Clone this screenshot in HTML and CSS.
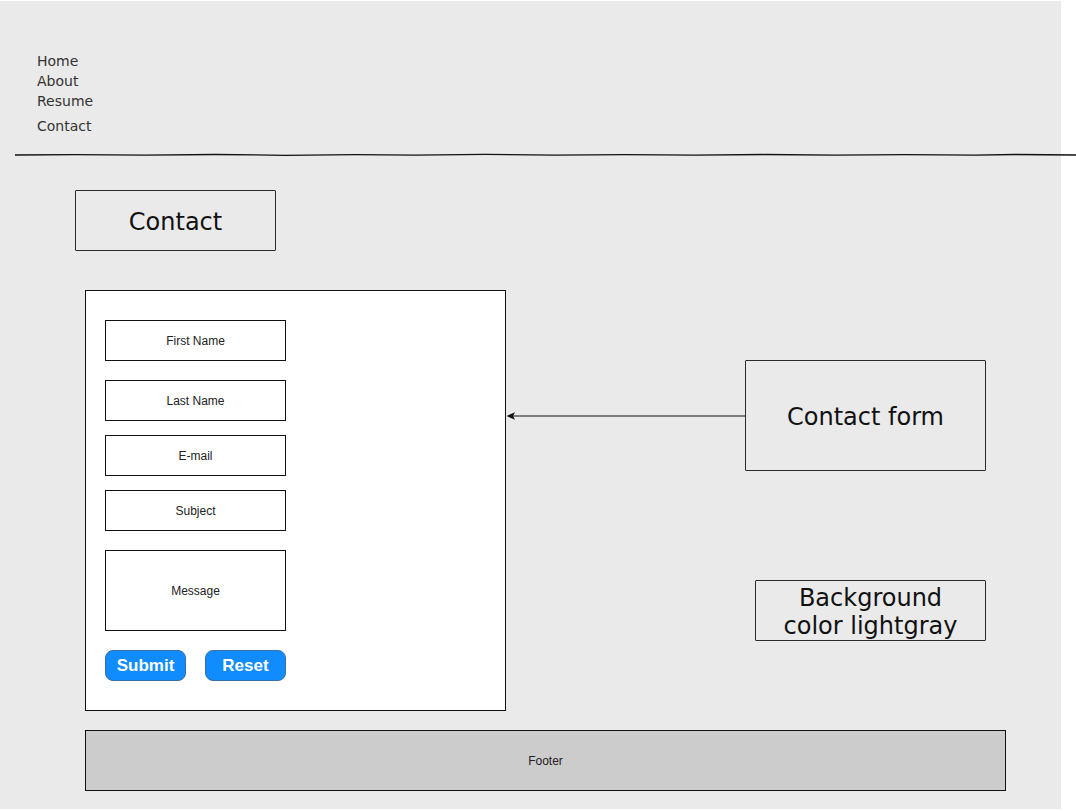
FILE: index.html
```html
<!DOCTYPE html>
<html lang="en">
<head>
  <meta charset="UTF-8" />
  <meta name="viewport" content="width=device-width, initial-scale=1.0" />
  <title>Contact - Wireframe</title>
  <link rel="stylesheet" href="styles.css">
</head>
<body>
  <div class="canvas">
    <header class="site-header">
      <nav class="nav">
        <a href="#">Home</a>
        <a href="#">About</a>
        <a href="#">Resume</a>
        <a href="#" class="nav-last">Contact</a>
      </nav>
    </header>

    <svg class="divider" width="1061" height="4" viewBox="0 0 1061 4">
      <path d="M0 2 L60 1.6 L130 2.2 L200 1.5 L270 2.3 L340 1.7 L400 2.1 L470 1.4 L540 2.2 L610 1.6 L680 2.1 L750 1.5 L820 2.2 L890 1.6 L960 2.1 L1000 1.5 L1061 2" fill="none" stroke="#111" stroke-width="1.3" />
    </svg>

    <main class="main">
      <div class="sketch-box title-box">Contact</div>

      <div class="content-row">
        <form class="form-panel" onsubmit="return false">
          <div class="field">First Name</div>
          <div class="field gap-lg">Last Name</div>
          <div class="field">E-mail</div>
          <div class="field">Subject</div>
          <div class="field field-message gap-lg">Message</div>
          <div class="buttons">
            <button type="submit" class="btn">Submit</button>
            <button type="reset" class="btn">Reset</button>
          </div>
        </form>

        <div class="notes">
          <div class="note-row">
            <svg class="arrow" width="239" height="10" viewBox="0 0 239 10">
              <path d="M6 5 H239" stroke="#111" stroke-width="1" />
              <path d="M0.5 5 L9 1.2 L7 5 L9 8.8 Z" fill="#111" />
            </svg>
            <div class="sketch-box note-form">Contact form</div>
          </div>
          <div class="sketch-box note-bg">Background<br>color lightgray</div>
        </div>
      </div>

      <footer class="footer">Footer</footer>
    </main>
  </div>
</body>
</html>
```

FILE: styles.css
```css
* {
  box-sizing: border-box;
  margin: 0;
  padding: 0;
}

body {
  background: #ffffff;
  width: 1076px;
  height: 811px;
  overflow: hidden;
}

.canvas {
  width: 1061px;
  height: 808px;
  margin-top: 1px;
  background: #eaeaea;
  font-family: 'DejaVu Sans', sans-serif;
  color: #111;
}

.site-header {
  padding: 50px 0 0 37px;
}

.nav {
  display: flex;
  flex-direction: column;
}

.nav a {
  color: #333;
  text-decoration: none;
  font-size: 14px;
  line-height: 20px;
}

.nav .nav-last {
  margin-top: 5px;
}

.divider {
  display: block;
  margin: 17px 0 0 15px;
}

.main {
  padding-left: 75px;
}

.sketch-box {
  border: 1px solid #2a2a2a;
  border-radius: 1px;
  display: flex;
  align-items: center;
  justify-content: center;
  text-align: center;
  font-size: 24px;
  color: #111;
}

.title-box {
  margin-top: 33px;
  width: 201px;
  height: 61px;
  padding-top: 2px;
}

.content-row {
  display: flex;
  margin-top: 39px;
  margin-left: 10px;
}

.form-panel {
  width: 421px;
  height: 421px;
  background: #ffffff;
  border: 1px solid #111;
  padding: 29px 0 0 19px;
  display: flex;
  flex-direction: column;
  gap: 14px;
  font-family: 'Liberation Sans', Arial, sans-serif;
}

.field {
  width: 181px;
  height: 41px;
  border: 1px solid #111;
  background: #ffffff;
  display: flex;
  align-items: center;
  justify-content: center;
  font-size: 12px;
  color: #222;
}

.field.gap-lg {
  margin-top: 5px;
}

.field-message {
  height: 81px;
}

.buttons {
  display: flex;
  gap: 19px;
  margin-top: 5px;
}

.btn {
  width: 81px;
  height: 31px;
  border: 1px solid #3b6ea6;
  border-radius: 8px;
  background: #118cff;
  color: #ffffff;
  font-family: 'Liberation Sans', Arial, sans-serif;
  font-weight: bold;
  font-size: 17px;
  cursor: pointer;
}

.notes {
  display: flex;
  flex-direction: column;
}

.note-row {
  display: flex;
  align-items: center;
  margin-top: 70px;
}

.arrow {
  display: block;
  margin-top: 1px;
}

.note-form {
  width: 241px;
  height: 111px;
  padding-top: 3px;
}

.note-bg {
  width: 231px;
  height: 61px;
  margin: 109px 0 0 249px;
  padding-top: 2px;
  line-height: 28px;
}

.footer {
  margin: 19px 0 0 10px;
  width: 921px;
  height: 61px;
  background: #cccccc;
  border: 1px solid #111;
  display: flex;
  align-items: center;
  justify-content: center;
  font-family: 'Liberation Sans', Arial, sans-serif;
  font-size: 12px;
  color: #222;
}
```
